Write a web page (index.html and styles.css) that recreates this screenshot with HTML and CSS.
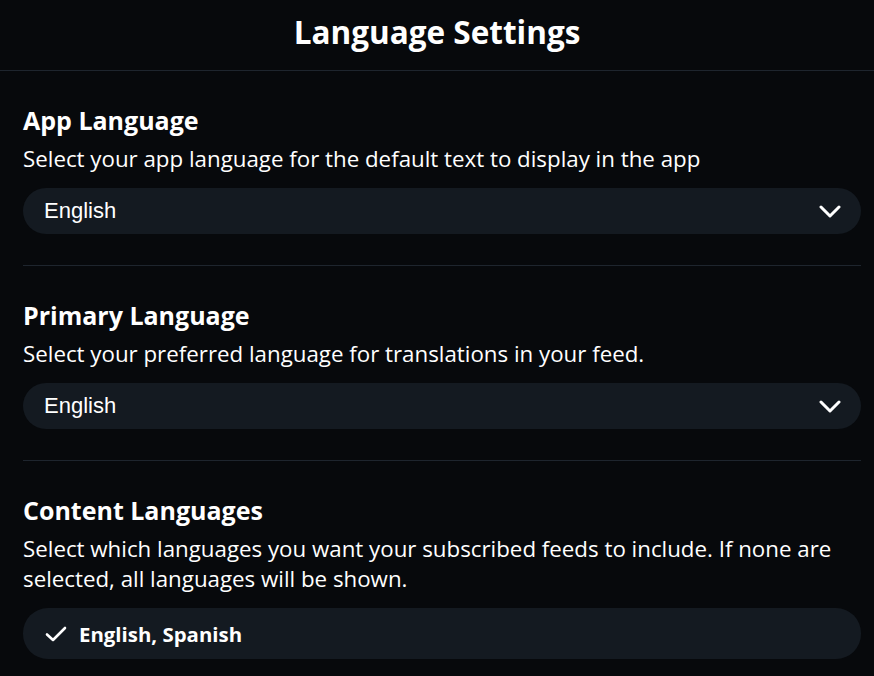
FILE: index.html
```html
<!DOCTYPE html>
<html lang="en">
<head>
<meta charset="utf-8">
<title>Language Settings</title>
<link rel="stylesheet" href="styles.css">
</head>
<body>
<header class="topbar"><h1 class="page-title">Language Settings</h1></header>
<main class="content">
  <section class="setting">
    <h2 class="setting-title">App Language</h2>
    <p class="setting-desc">Select your app language for the default text to display in the app</p>
    <div class="select">
      <span class="select-value">English</span>
      <svg class="chevron" width="22" height="13" viewBox="0 0 22 13"><path d="M2 2 L11 11 L20 2" fill="none" stroke="#fff" stroke-width="3" stroke-linecap="round" stroke-linejoin="round"/></svg>
    </div>
  </section>
  <section class="setting">
    <h2 class="setting-title">Primary Language</h2>
    <p class="setting-desc">Select your preferred language for translations in your feed.</p>
    <div class="select">
      <span class="select-value">English</span>
      <svg class="chevron" width="22" height="13" viewBox="0 0 22 13"><path d="M2 2 L11 11 L20 2" fill="none" stroke="#fff" stroke-width="3" stroke-linecap="round" stroke-linejoin="round"/></svg>
    </div>
  </section>
  <section class="setting last">
    <h2 class="setting-title">Content Languages</h2>
    <p class="setting-desc">Select which languages you want your subscribed feeds to include. If none are selected, all languages will be shown.</p>
    <div class="picker">
      <svg class="check" width="22" height="16" viewBox="0 0 22 16"><path d="M2 8.5 L8 14 L20 2" fill="none" stroke="#fff" stroke-width="2.6" stroke-linecap="round" stroke-linejoin="round"/></svg>
      <span class="picker-value">English, Spanish</span>
    </div>
  </section>
</main>
</body>
</html>
```
FILE: styles.css
```css
html, body {
  margin: 0;
  background: #07090c;
  color: #ffffff;
  font-family: "Open Sans", "Noto Sans", sans-serif;
}
.topbar {
  height: 71px;
  box-sizing: border-box;
  padding-bottom: 7px;
  display: flex;
  align-items: center;
  justify-content: center;
  border-bottom: 1px solid #1e252e;
}
.page-title {
  margin: 0;
  font-size: 31.5px;
  line-height: 40px;
  font-weight: 700;
}
.content {
  padding: 0 13px 0 23px;
}
.setting {
  padding-top: 33px;
  padding-bottom: 31px;
  border-bottom: 1px solid #1e252e;
}
.setting.last {
  border-bottom: none;
}
.setting-title {
  margin: 0;
  font-size: 25px;
  line-height: 32px;
  font-weight: 700;
}
.setting-desc {
  margin: 8px 0 14px;
  font-size: 22.3px;
  line-height: 30px;
}
.select {
  height: 46px;
  border-radius: 23px;
  background: #141a21;
  display: flex;
  align-items: center;
  justify-content: space-between;
  padding: 0 20px 0 21px;
}
.select-value {
  font-family: "Liberation Sans", Arial, sans-serif;
  font-size: 22px;
}
.picker {
  height: 51px;
  border-radius: 25px;
  background: #141a21;
  display: flex;
  align-items: center;
  gap: 12px;
  padding: 0 21px 0 22px;
}
.picker-value {
  font-size: 20.4px;
  font-weight: 700;
}
```
